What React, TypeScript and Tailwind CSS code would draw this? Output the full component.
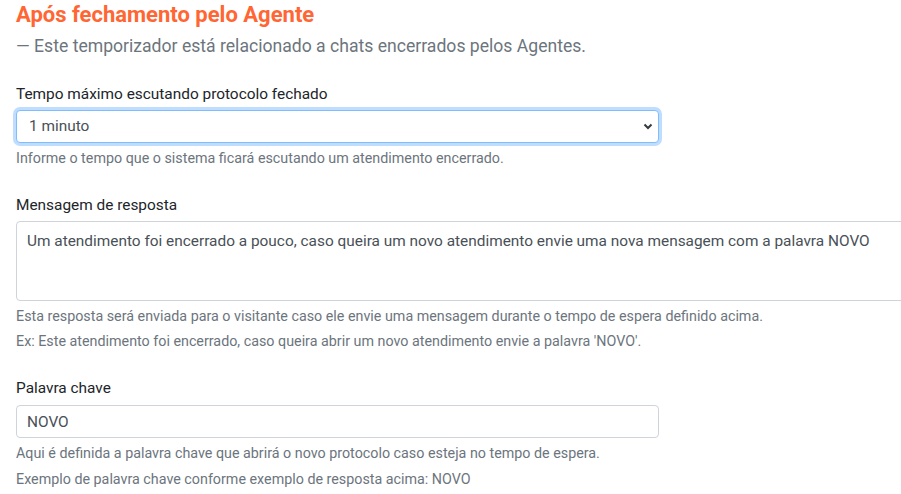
const helper = "text-[14.3px] leading-[18px] text-[#6c757d]";
const label = "block text-[15.4px] leading-[20px] text-[#212529]";

export default function App() {
  return (
    <div className="min-h-screen w-full overflow-hidden bg-white px-4 font-['Roboto','Liberation_Sans',sans-serif]">
      {/* Header */}
      <h3 className="text-[22px] font-bold leading-[30px] text-[#ff6633]">Após fechamento pelo Agente</h3>
      <p className="mt-1 text-[17.6px] leading-[24px] text-[#6c757d]">
        — Este temporizador está relacionado a chats encerrados pelos Agentes.
      </p>

      {/* Tempo máximo */}
      <div className="mt-[26px] w-[643px]">
        <label className={label}>Tempo máximo escutando protocolo fechado</label>
        <div className="relative mt-[6px]">
          <select className="h-[33px] w-full appearance-none rounded border border-[#80bdff] bg-white pl-3 pr-8 text-[15.4px] text-[#495057] shadow-[0_0_0_3px_rgba(0,123,255,0.25)] outline-none">
            <option>1 minuto</option>
          </select>
          <svg className="pointer-events-none absolute right-[6px] top-[12px] h-[9px] w-[10px]" viewBox="0 0 10 9">
            <path d="M1.5 2.5 L5 6 L8.5 2.5" fill="none" stroke="#343a40" strokeWidth="2" />
          </svg>
        </div>
        <p className={`mt-[6px] ${helper}`}>Informe o tempo que o sistema ficará escutando um atendimento encerrado.</p>
      </div>

      {/* Mensagem */}
      <div className="mt-[28px]">
        <label className={label}>Mensagem de resposta</label>
        <textarea
          className="mt-[6px] block h-[80px] w-[920px] resize-none rounded border border-[#ced4da] px-[10px] py-[8px] text-[15.4px] leading-[22px] text-[#495057] outline-none"
          defaultValue="Um atendimento foi encerrado a pouco, caso queira um novo atendimento envie uma nova mensagem com a palavra NOVO"
        />
        <p className={`mt-[6px] ${helper}`}>
          Esta resposta será enviada para o visitante caso ele envie uma mensagem durante o tempo de espera definido acima.
        </p>
        <p className={`mt-[7px] ${helper}`}>
          Ex: Este atendimento foi encerrado, caso queira abrir um novo atendimento envie a palavra 'NOVO'.
        </p>
      </div>

      {/* Palavra chave */}
      <div className="mt-[28px] w-[643px]">
        <label className={label}>Palavra chave</label>
        <input
          className="mt-[7px] block h-[33px] w-full rounded border border-[#ced4da] px-[10px] text-[15.4px] text-[#495057] outline-none"
          defaultValue="NOVO"
        />
        <p className={`mt-[6px] ${helper}`}>Aqui é definida a palavra chave que abrirá o novo protocolo caso esteja no tempo de espera.</p>
        <p className={`mt-[8px] ${helper}`}>Exemplo de palavra chave conforme exemplo de resposta acima: NOVO</p>
      </div>
    </div>
  );
}
